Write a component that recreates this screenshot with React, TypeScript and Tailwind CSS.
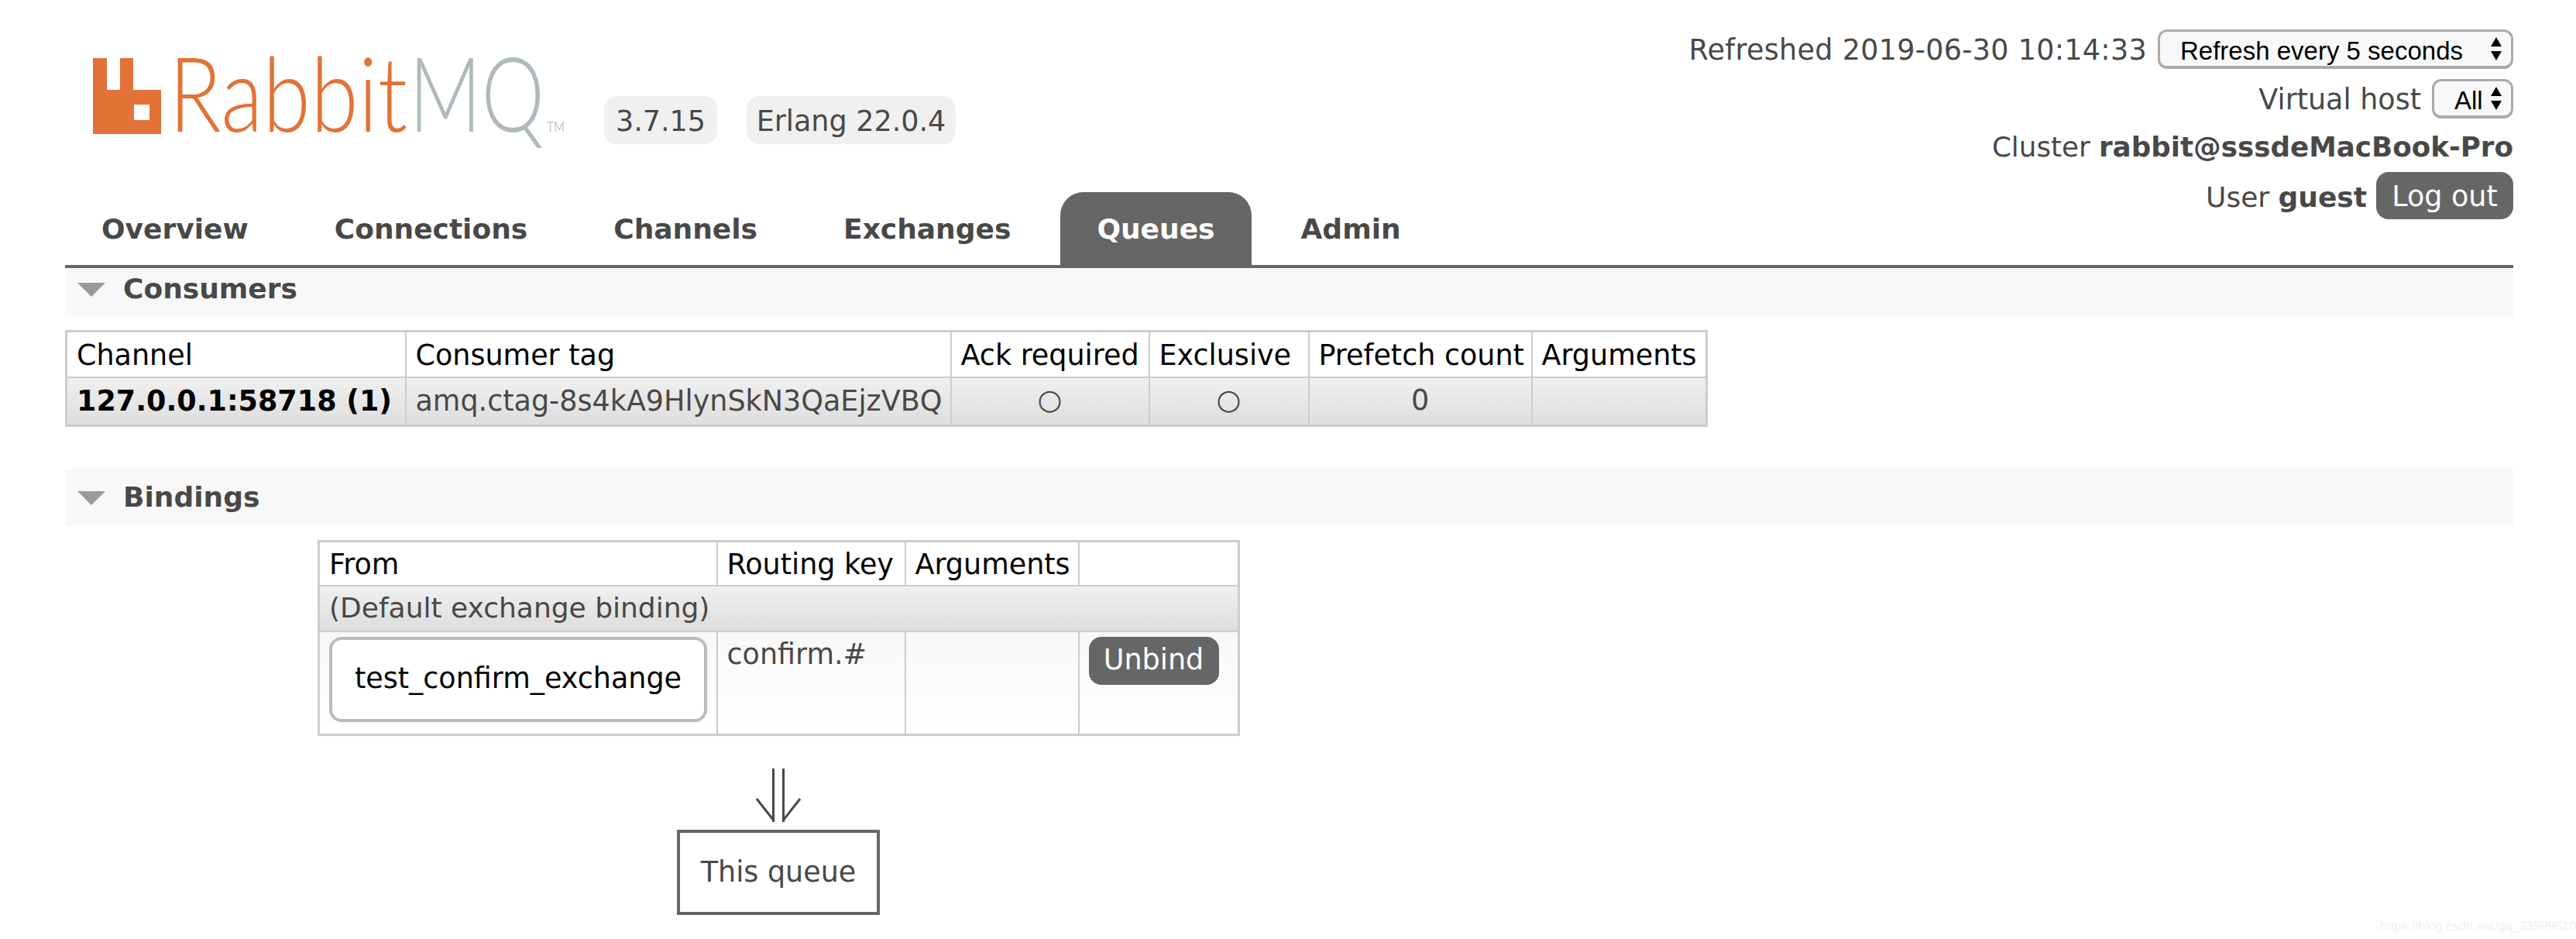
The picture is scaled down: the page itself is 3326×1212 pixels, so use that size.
import React from 'react';

const tabs = ['Overview', 'Connections', 'Channels', 'Exchanges', 'Queues', 'Admin'];

const cellClass = 'border-2 border-[#ccc] px-[12px] whitespace-nowrap';
const headClass = `${cellClass} font-normal text-left pt-[3px] leading-[48px]`;

const Logo = () => (
  <svg width="620" height="120" viewBox="120 60 620 120" className="block overflow-visible">
    <path
      fill="#e27236"
      fillRule="evenodd"
      d="M120 75h18v41h17V75h17v41h36v57h-88zM173 135v20h20v-20z"
    />
    <text x="218" y="170" fontFamily="Lato, sans-serif" fontWeight="300" fontSize="135" fill="#e27236" textLength="308" lengthAdjust="spacingAndGlyphs">
      Rabbit
    </text>
    <text x="528" y="170" fontFamily="Lato, sans-serif" fontWeight="300" fontSize="135" fill="#aebbb5" textLength="175" lengthAdjust="spacingAndGlyphs">
      MQ
    </text>
    <text x="706" y="170" fontFamily="Lato, sans-serif" fontSize="18" fill="#c3cbc8" textLength="23" lengthAdjust="spacingAndGlyphs">
      TM
    </text>
  </svg>
);

const SelectBox = ({ label, className }: { label: string; className: string }) => (
  <div className={`relative h-[51px] ${className}`}>
    <select className="w-full h-full appearance-none rounded-[12px] border-[3px] border-b-[4px] border-[#aaa] bg-[#f8f8f8] pl-[26px] text-[33px] text-black font-['Liberation_Sans',sans-serif]">
      <option>{label}</option>
    </select>
    <svg width="16" height="30" viewBox="0 0 16 30" className="absolute right-[14px] top-[10px]">
      <path d="M8 0l7 12H1zM8 30l-7-12h14z" fill="#000" />
    </svg>
  </div>
);

const SectionBar = ({ title, className }: { title: string; className: string }) => (
  <div className={`flex items-start bg-[#f8f8f8] ${className}`}>
    <svg width="36" height="18" viewBox="0 0 36 18" className="ml-[16px] mt-[19px]">
      <path d="M0 0h36L18 18z" fill="#999" />
    </svg>
    <h2 className="ml-[23px] text-[36px] leading-[54px] font-bold text-[#484848]">{title}</h2>
  </div>
);

const App = () => {
  return (
    <div className="relative min-h-[1212px] bg-white pl-[84px] pr-[81px] font-['DejaVu_Sans',sans-serif] text-[36.5px] text-[#484848]">
      {/* Header */}
      <div className="flex justify-between h-[346px] border-b-[4px] border-[#666]">
        <div className="flex flex-col justify-between">
          <div className="flex items-start pt-[60px] pl-[36px]">
            <Logo />
            <span className="ml-[40px] mt-[64px] h-[62px] w-[146px] rounded-[16px] bg-[#f0f0f0] text-center leading-[65px]">3.7.15</span>
            <span className="ml-[38px] mt-[64px] h-[62px] w-[270px] rounded-[16px] bg-[#f0f0f0] text-center leading-[65px]">Erlang 22.0.4</span>
          </div>
          <nav className="flex gap-[17px]">
            {tabs.map((tab) => (
              <a
                key={tab}
                className={`h-[94px] px-[47px] rounded-t-[30px] text-[36px] font-bold leading-[96px] ${
                  tab === 'Queues' ? 'bg-[#666] text-white' : 'text-[#484848]'
                }`}
              >
                {tab}
              </a>
            ))}
          </nav>
        </div>

        <div className="flex flex-col items-end pt-[38px]">
          <div className="flex h-[51px] items-center gap-[14px]">
            <span className="pt-[3px] tracking-[0.3px]">Refreshed 2019-06-30 10:14:33</span>
            <SelectBox label="Refresh every 5 seconds" className="w-[459px]" />
          </div>
          <div className="flex h-[51px] items-center gap-[14px] mt-[13px]">
            <span className="pt-[3px]">Virtual host</span>
            <SelectBox label="All" className="w-[105px]" />
          </div>
          <div className="mt-[13px] h-[48px] text-[35.7px] leading-[48px]">
            Cluster <b>rabbit@sssdeMacBook-Pro</b>
          </div>
          <div className="flex h-[61px] items-center gap-[12px] mt-[8px] text-[36px]">
            <span className="pt-[4px]">
              User <b>guest</b>
            </span>
            <button className="h-[61px] w-[177px] rounded-[16px] bg-[#666] pt-[4px] text-[36.5px] text-white">Log out</button>
          </div>
        </div>
      </div>

      {/* Consumers */}
      <SectionBar title="Consumers" className="h-[63px]" />
      <table className="mt-[17px] w-[2118px] border-collapse table-fixed border-[3px] border-[#ccc]">
        <thead>
          <tr className="h-[59px] text-black">
            <th className={`${headClass} w-[438px]`}>Channel</th>
            <th className={`${headClass} w-[704px]`}>Consumer tag</th>
            <th className={`${headClass} w-[256px]`}>Ack required</th>
            <th className={`${headClass} w-[206px]`}>Exclusive</th>
            <th className={`${headClass} w-[288px]`}>Prefetch count</th>
            <th className={`${headClass} w-[226px]`}>Arguments</th>
          </tr>
        </thead>
        <tbody>
          <tr className="h-[63px] bg-gradient-to-b from-[#f0f0f0] to-[#ddd]">
            <td className={`${cellClass} leading-[50px] font-bold text-black`}>127.0.0.1:58718 (1)</td>
            <td className={`${cellClass} leading-[50px]`}>amq.ctag-8s4kA9HlynSkN3QaEjzVBQ</td>
            <td className={`${cellClass} leading-[50px] pb-[3px] text-center`}>○</td>
            <td className={`${cellClass} leading-[50px] pb-[3px] text-center`}>○</td>
            <td className={`${cellClass} leading-[50px] pb-[2px] text-center`}>0</td>
            <td className={cellClass}></td>
          </tr>
        </tbody>
      </table>

      {/* Bindings */}
      <SectionBar title="Bindings" className="h-[73px] mt-[54px] pt-[10px]" />
      <table className="mt-[19px] ml-[326px] w-[1188px] border-collapse table-fixed border-[3px] border-[#ccc]">
        <thead>
          <tr className="h-[57px] text-black">
            <th className={`${headClass} w-[514px]`}>From</th>
            <th className={`${headClass} w-[243px]`}>Routing key</th>
            <th className={`${headClass} w-[224px]`}>Arguments</th>
            <th className={`${headClass} w-[207px]`}></th>
          </tr>
        </thead>
        <tbody>
          <tr className="h-[59px] bg-gradient-to-b from-[#f0f0f0] to-[#ddd]">
            <td colSpan={4} className={`${cellClass} text-[36px]`}>(Default exchange binding)</td>
          </tr>
          <tr className="h-[134px] align-top bg-gradient-to-b from-[#f8f8f8] to-white">
            <td className={`${cellClass} pt-[6px]`}>
              <div className="flex h-[110px] w-[488px] items-center justify-center rounded-[16px] border-[4px] border-[#bbb] bg-white text-black">
                test_confirm_exchange
              </div>
            </td>
            <td className={`${cellClass} pt-[2px]`}>confirm.#</td>
            <td className={cellClass}></td>
            <td className={`${cellClass} pt-[6px]`}>
              <button className="h-[62px] w-[168px] rounded-[16px] bg-[#666] text-white">Unbind</button>
            </td>
          </tr>
        </tbody>
      </table>

      {/* Arrow to queue */}
      <div className="ml-[790px] mt-[42px] flex w-[262px] flex-col items-center">
        <svg width="60" height="70" viewBox="0 0 60 70" fill="none" stroke="#484848" strokeWidth="3">
          <path d="M23.5 0v69M36.5 0v69M2 39l22 28M58 39L36 67" />
        </svg>
        <div className="mt-[9px] flex h-[110px] w-[262px] items-center justify-center border-[4px] border-[#666]">
          This queue
        </div>
      </div>

      {/* Watermark */}
      <span className="absolute left-[3073px] top-[1186px] whitespace-nowrap font-['Liberation_Sans',sans-serif] text-[16.5px] leading-[18px] text-[#f0f0f0]">
        https://blog.csdn.net/qq_33589510
      </span>
    </div>
  );
};

export default App;
